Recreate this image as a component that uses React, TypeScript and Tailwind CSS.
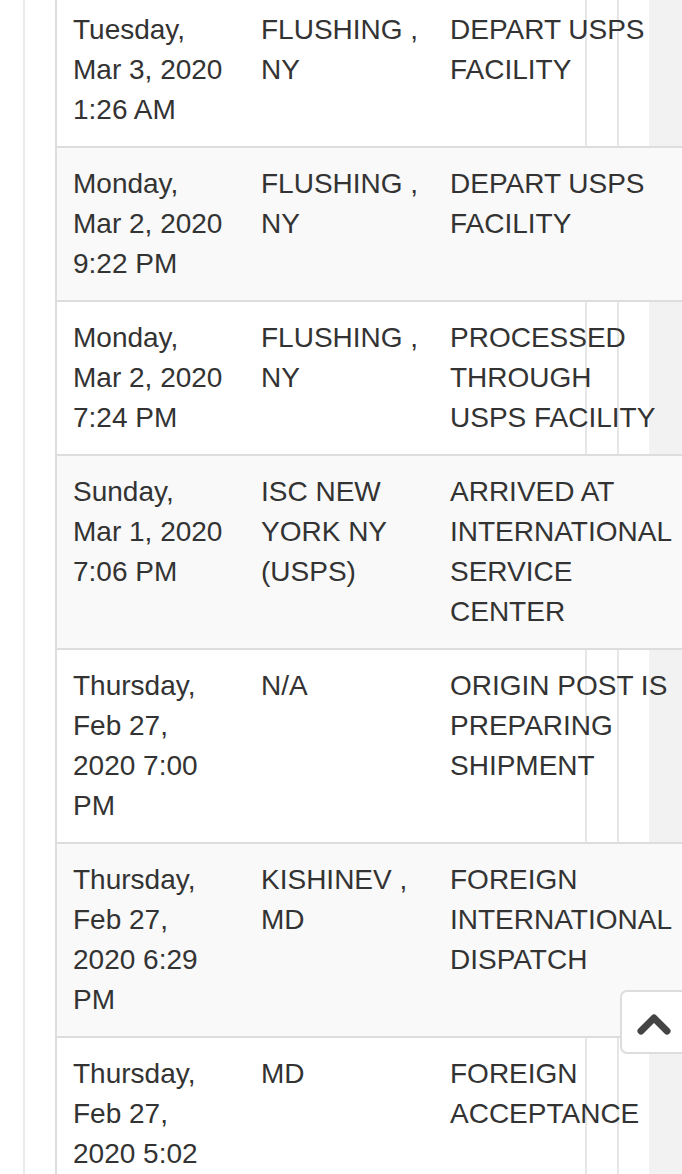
interface TrackingEvent {
  date: string[];
  location: string;
  status: string;
}

const events: TrackingEvent[] = [
  { date: ['Tuesday,', 'Mar 3, 2020', '1:26 AM'], location: 'FLUSHING , NY', status: 'DEPART USPS FACILITY' },
  { date: ['Monday,', 'Mar 2, 2020', '9:22 PM'], location: 'FLUSHING , NY', status: 'DEPART USPS FACILITY' },
  { date: ['Monday,', 'Mar 2, 2020', '7:24 PM'], location: 'FLUSHING , NY', status: 'PROCESSED THROUGH USPS FACILITY' },
  { date: ['Sunday,', 'Mar 1, 2020', '7:06 PM'], location: 'ISC NEW YORK NY (USPS)', status: 'ARRIVED AT INTERNATIONAL SERVICE CENTER' },
  { date: ['Thursday,', 'Feb 27, 2020 7:00 PM'], location: 'N/A', status: 'ORIGIN POST IS PREPARING SHIPMENT' },
  { date: ['Thursday,', 'Feb 27, 2020 6:29 PM'], location: 'KISHINEV , MD', status: 'FOREIGN INTERNATIONAL DISPATCH' },
  { date: ['Thursday,', 'Feb 27, 2020 5:02 PM'], location: 'MD', status: 'FOREIGN ACCEPTANCE' },
];

export default function App() {
  return (
    <div className="relative h-[1174px] w-[682px] overflow-hidden bg-[linear-gradient(to_right,#fff_585px,#e6e6e6_585px,#e6e6e6_587px,#fff_587px,#fff_617px,#e6e6e6_617px,#e6e6e6_619px,#fff_619px,#fff_649px,#f2f2f2_649px)] font-['Liberation_Sans',Arial,sans-serif] text-[28px] leading-[40px] text-[#333]">
      <div className="flex h-full">
        <div className="w-[23px] shrink-0 bg-white" />
        <div className="shrink-0 border-l-2 border-[#ebebeb] bg-white pl-[30px]" />
        {/* Tracking history table */}
        <div className="-mt-[8px] shrink-0 border-l-2 border-[#ddd]">
          {events.map((ev, i) => (
            <div
              key={i}
              className={`grid grid-cols-[188px_189px_320px] border-t-2 border-[#ddd] ${
                i % 2 === 1 ? 'bg-[#f9f9f9]' : ''
              }`}
            >
              <div className="p-4">
                {ev.date.map((d, j) => (
                  <div key={j}>{d}</div>
                ))}
              </div>
              <div className="py-4 pl-4 pr-[14px]">{ev.location}</div>
              <div className="p-4">
                <div className="w-[224.8px]">{ev.status}</div>
              </div>
            </div>
          ))}
        </div>
      </div>

      {/* Back to top */}
      <button className="absolute left-[620px] top-[990px] flex h-[64px] w-[80px] items-start rounded-l-[7px] border-2 border-[#ddd] bg-white pl-[15px] pt-[20px]">
        <svg width="34" height="24" viewBox="0 0 34 24">
          <polyline
            points="4,19 17,6 30,19"
            fill="none"
            stroke="#444"
            strokeWidth="7"
            strokeLinecap="round"
            strokeLinejoin="round"
          />
        </svg>
      </button>
    </div>
  );
}
